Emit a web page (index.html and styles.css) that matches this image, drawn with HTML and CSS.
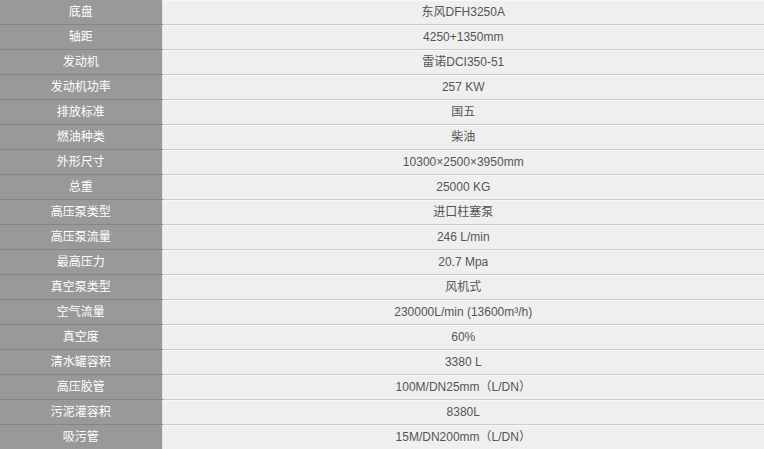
FILE: index.html
```html
<!DOCTYPE html>
<html lang="zh">
<head>
<meta charset="utf-8">
<link rel="stylesheet" href="styles.css">
</head>
<body>
<table class="spec">
<tr><th>底盘</th><td>东风DFH3250A</td></tr>
<tr><th>轴距</th><td>4250+1350mm</td></tr>
<tr><th>发动机</th><td>雷诺DCI350-51</td></tr>
<tr><th>发动机功率</th><td>257 KW</td></tr>
<tr><th>排放标准</th><td>国五</td></tr>
<tr><th>燃油种类</th><td>柴油</td></tr>
<tr><th>外形尺寸</th><td>10300×2500×3950mm</td></tr>
<tr><th>总重</th><td>25000 KG</td></tr>
<tr><th>高压泵类型</th><td>进口柱塞泵</td></tr>
<tr><th>高压泵流量</th><td>246 L/min</td></tr>
<tr><th>最高压力</th><td>20.7 Mpa</td></tr>
<tr><th>真空泵类型</th><td>风机式</td></tr>
<tr><th>空气流量</th><td>230000L/min (13600m³/h)</td></tr>
<tr><th>真空度</th><td>60%</td></tr>
<tr><th>清水罐容积</th><td>3380 L</td></tr>
<tr><th>高压胶管</th><td>100M/DN25mm（L/DN）</td></tr>
<tr><th>污泥灌容积</th><td>8380L</td></tr>
<tr><th>吸污管</th><td>15M/DN200mm（L/DN）</td></tr>
</table>
</body>
</html>
```
FILE: styles.css
```css
html, body {
  margin: 0;
  padding: 0;
  background: #efefef;
}
.spec {
  width: 764px;
  border-collapse: collapse;
  table-layout: fixed;
  font-family: "Liberation Sans", "Noto Sans CJK SC", sans-serif;
  font-size: 12px;
}
.spec th, .spec td {
  height: 24px;
  padding: 0;
  text-align: center;
  vertical-align: middle;
  font-weight: normal;
  line-height: 24px;
}
.spec th {
  width: 162px;
  background: #999999;
  color: #ffffff;
  border-bottom: 1px solid #858585;
  border-right: 1px solid #e6e6e6;
  box-sizing: border-box;
}
.spec td {
  background: #efefef;
  color: #555555;
  border-bottom: 1px solid #cccccc;
  box-shadow: inset 0 1px 0 #f8f8f8;
}
```
